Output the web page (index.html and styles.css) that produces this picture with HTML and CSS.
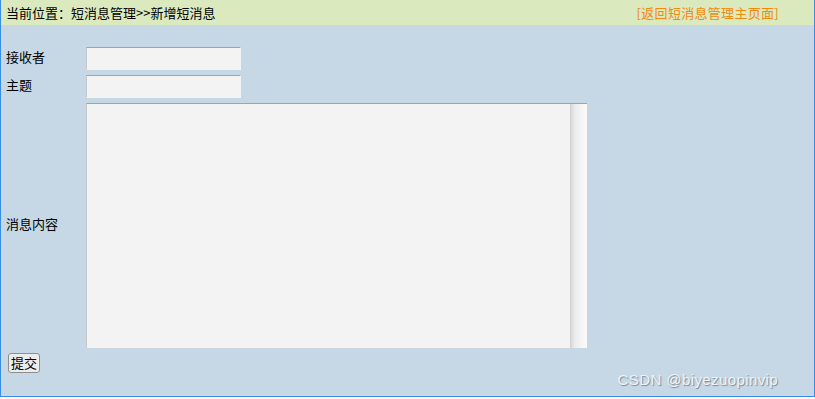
FILE: index.html
```html
<!DOCTYPE html>
<html>
<head>
    <title>新增短消息</title>
    <link rel="stylesheet" href="styles.css">
</head>
<body>
    <div class="page">
        <div class="topbar">
            <span>当前位置：短消息管理&gt;&gt;新增短消息</span>
            <a href="#" class="back">[返回短消息管理主页面]</a>
        </div>
        <form class="msg-form">
            <div class="row">
                <label for="receiver">接收者</label>
                <input type="text" id="receiver" name="receiver">
            </div>
            <div class="row">
                <label for="title">主题</label>
                <input type="text" id="title" name="title">
            </div>
            <div class="row">
                <label for="content">消息内容</label>
                <div class="area-box">
                    <textarea id="content" name="content"></textarea>
                    <div class="scroll-track"></div>
                </div>
            </div>
            <button type="button">提交</button>
        </form>
        <div class="watermark">CSDN @biyezuopinvip</div>
    </div>
</body>
</html>
```

FILE: styles.css
```css
body {
    margin: 0;
    font-family: "Noto Sans CJK SC", "DejaVu Sans", sans-serif;
    font-size: 13px;
    color: #000;
    background-color: #fff;
}
.page {
    position: relative;
    height: 396px;
    background-color: #c6d8e6;
    border: 1px solid #3a8ee2;
    border-top: none;
    box-sizing: content-box;
    width: 813px;
}
.topbar {
    display: flex;
    justify-content: space-between;
    align-items: center;
    height: 25px;
    padding: 0 35px 0 5px;
    background-color: #dbe9be;
    line-height: 25px;
}
.back {
    color: #f08a0e;
    text-decoration: none;
    letter-spacing: 0.3px;
}
.msg-form {
    padding: 22px 0 0 5px;
}
.row {
    display: flex;
    align-items: center;
    margin-bottom: 5px;
}
.row label {
    width: 80px;
    flex-shrink: 0;
    padding-bottom: 4px;
}
input[type="text"] {
    width: 155px;
    height: 23px;
    box-sizing: border-box;
    background-color: #f3f3f3;
    border: 1px solid #f3f3f3;
    border-top-color: #a3a3a3;
    border-left-color: #c8c8c8;
    outline: none;
    padding: 0 3px;
}
.area-box {
    display: flex;
    height: 245px;
    width: 501px;
    background-color: #f3f3f3;
    border-top: 1px solid #a3a3a3;
    border-left: 1px solid #c8c8c8;
    box-sizing: border-box;
}
.area-box textarea {
    flex: 1;
    border: none;
    resize: none;
    outline: none;
    background-color: #f3f3f3;
    padding: 2px;
}
.scroll-track {
    width: 17px;
    background: linear-gradient(to right, #cfcfcf 0, #dedede 2px, #ececec 5px, #f6f6f6 12px, #fafafa 17px);
}
button {
    margin: 0 0 0 2px;
    padding: 0 2px;
    height: 20px;
    font-family: inherit;
    font-size: 13px;
    background-color: #ececec;
    border: 1px solid #8e8e8e;
    border-radius: 3px;
    line-height: 18px;
}
.watermark {
    position: absolute;
    right: 36px;
    bottom: 8px;
    font-family: "Liberation Sans", Arial, sans-serif;
    font-size: 15px;
    color: #eef2f6;
    text-shadow: 1px 1px 1px #7d8890;
    letter-spacing: 0.4px;
}
```
